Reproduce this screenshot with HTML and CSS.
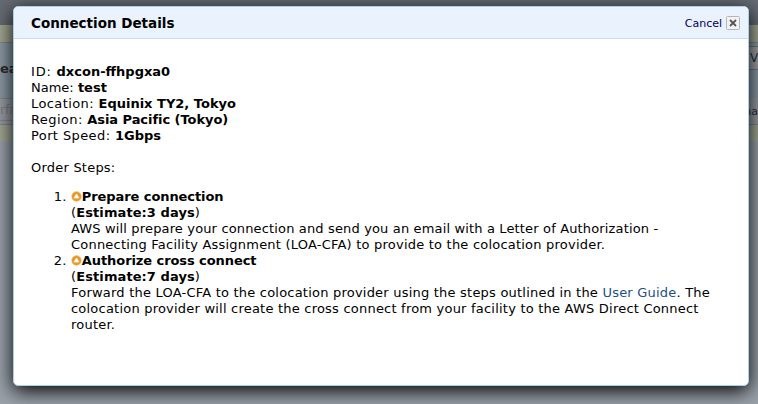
FILE: index.html
```html
<!DOCTYPE html>
<html lang="en">

<head>
  <meta charset="UTF-8">
  <title>Connection Details</title>
  <link rel="stylesheet" href="styles.css">
</head>

<body>
  <!-- dimmed console page -->
  <div class="page">
    <div class="topbar"></div>
    <div class="strip"></div>
    <div class="toolbar"><span class="heading">ea</span><span class="view">V</span></div>
    <div class="filters"><span class="filter">rfa</span><span class="column">na</span></div>
    <div class="strip strip-low"></div>
    <div class="rest"></div>
  </div>

  <div class="dialog">
    <div class="dialog-header">
      <h1>Connection Details</h1>
      <a class="cancel">Cancel</a>
      <svg class="close" width="14" height="14" viewBox="0 0 14 14">
        <rect x=".5" y=".5" width="13" height="13" rx="1" fill="#f2f2f2" stroke="#b5b5b5"/>
        <path d="M4 4l6 6M10 4l-6 6" stroke="#555" stroke-width="1.8"/>
      </svg>
    </div>
    <div class="dialog-body">
      <div><span class="label label-id">ID: </span><b>dxcon-ffhpgxa0</b></div>
      <div>Name: <b>test</b></div>
      <div><span class="label">Location: </span><b>Equinix TY2, Tokyo</b></div>
      <div><span class="label">Region: </span><b class="region">Asia Pacific (Tokyo)</b></div>
      <div><span class="label">Port Speed: </span><b>1Gbps</b></div>
      <p>Order Steps:</p>
      <ol>
        <li>
          <svg class="status" width="11" height="11" viewBox="0 0 11 11">
            <circle cx="5.5" cy="5.5" r="4.9" fill="#e5982c" stroke="#f5d59b" stroke-width=".6"/>
            <path d="M5.5 3L8 7H3z" fill="#fff" stroke="#fff3d8" stroke-width=".8"/>
          </svg><b class="step">Prepare connection</b><br>
          (<b class="estimate">Estimate:3 days</b>)<br>
          <span class="long">AWS will prepare your connection and send you an email with a Letter of Authorization -</span><br>
          Connecting Facility Assignment (LOA-CFA) to provide to the colocation provider.
        </li>
        <li>
          <svg class="status" width="11" height="11" viewBox="0 0 11 11">
            <circle cx="5.5" cy="5.5" r="4.9" fill="#e5982c" stroke="#f5d59b" stroke-width=".6"/>
            <path d="M5.5 3L8 7H3z" fill="#fff" stroke="#fff3d8" stroke-width=".8"/>
          </svg><b class="step">Authorize cross connect</b><br>
          (<b class="estimate">Estimate:7 days</b>)<br>
          Forward the LOA-CFA to the colocation provider using the steps outlined in the <a class="guide">User Guide</a>. The<br>
          colocation provider will create the cross connect from your facility to the AWS Direct Connect<br>
          router.
        </li>
      </ol>
    </div>
  </div>
</body>

</html>
```
FILE: styles.css
```css
* {
  box-sizing: border-box;
}

body {
  margin: 0;
  height: 404px;
  overflow: hidden;
  font-family: Verdana, "DejaVu Sans", sans-serif;
  font-size: 13px;
  line-height: 16px;
  color: #000;
}

.page {
  display: flex;
  flex-direction: column;
  height: 404px;
  background: #9ba2aa;
  color: #2b2e33;
}

.topbar {
  height: 25px;
  background: #666b73;
}

.strip {
  height: 18px;
  background: #a3a795;
  border-bottom: 1px solid #7f858c;
}

.toolbar {
  display: flex;
  justify-content: space-between;
  height: 55px;
  padding-top: 18px;
  background: #8d9aa5;
}

.heading {
  font-weight: bold;
}

.view {
  width: 10px;
  height: 24px;
  margin-top: -15px;
  padding: 3px 2px;
  background: #a0a2a5;
  border-top: 1px solid #777;
  border-bottom: 1px solid #777;
  font-size: 12px;
}

.filters {
  display: flex;
  justify-content: space-between;
  height: 27px;
  background: #989ca2;
  border-bottom: 1px solid #7f858c;
}

.filter {
  width: 60px;
  height: 23px;
  padding-top: 3px;
  border-top: 1px solid #85888c;
  border-bottom: 1px solid #85888c;
  color: #7d8186;
  font-size: 12px;
}

.column {
  padding-top: 6px;
  font-size: 11px;
}

.strip-low {
  height: 16px;
  border-bottom: 0;
}

.rest {
  flex: 1;
}

.dialog {
  position: absolute;
  left: 13px;
  top: 6px;
  width: 736px;
  height: 380px;
  background: #fff;
  border: 1px solid #a9cfed;
  border-radius: 5px;
  box-shadow: 0 5px 20px #000;
  overflow: hidden;
}

.dialog-header {
  display: flex;
  align-items: center;
  height: 32px;
  padding: 0 8px 0 17px;
  background: #eaf2fe;
  border-bottom: 1px solid #c5def2;
}

h1 {
  flex: 1;
  margin: 0;
  font-size: 13.5px;
}

.cancel {
  margin: 2px 4px 0 0;
  color: #006;
  font-size: 11px;
}

.dialog-body {
  padding: 25px 17px;
  white-space: nowrap;
}

.dialog-body b {
  letter-spacing: 0;
}

.dialog-body .step {
  letter-spacing: -0.08px;
}

.dialog-body .estimate {
  letter-spacing: 0.08px;
}

.dialog-body .region {
  letter-spacing: -0.05px;
}

.label {
  letter-spacing: 0.4px;
}

.label-id {
  letter-spacing: 0.8px;
}

.dialog-body p {
  margin: 16px 0 13px;
  letter-spacing: 0.22px;
}

ol {
  margin: 0;
  padding-left: 40px;
  letter-spacing: 0.215px;
}

.long {
  letter-spacing: 0.15px;
}

.status {
  vertical-align: -1px;
  margin-right: -0.2px;
}

.guide {
  color: #1d4f8a;
}
```
